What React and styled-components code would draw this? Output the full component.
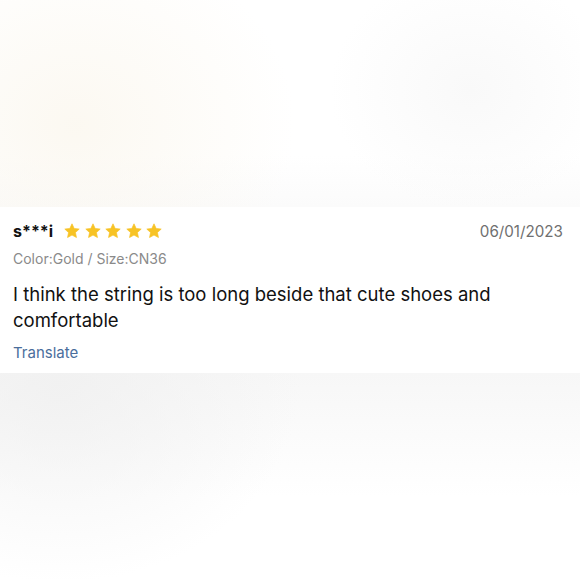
import React from "react";
import styled, { createGlobalStyle } from "styled-components";

const GlobalStyle = createGlobalStyle`
  html, body {
    margin: 0;
    padding: 0;
    background: #ffffff;
  }
  body {
    font-family: Inter, "Liberation Sans", sans-serif;
    -webkit-font-smoothing: antialiased;
  }
`;

const review = {
  user: "s***i",
  rating: 5,
  date: "06/01/2023",
  sku: "Color:Gold / Size:CN36",
  text: "I think the string is too long beside that cute shoes and comfortable",
};

const Star = () => (
  <svg width="16" height="16" viewBox="0 0 24 24">
    <path
      d="M12 1.2l3.3 7 7.5.9-5.6 5.2 1.5 7.5L12 18.1l-6.7 3.7 1.5-7.5-5.6-5.2 7.5-.9z"
      fill="#f7c325"
      stroke="#f7c325"
      strokeWidth="1"
      strokeLinejoin="round"
    />
  </svg>
);

const App = () => {
  return (
    <>
      <GlobalStyle />
      <Page>
        <TopBlur />
        <Card>
          <HeaderRow>
            <UserBox>
              <UserName>{review.user}</UserName>
              <Stars>
                {Array.from({ length: review.rating }).map((_, i) => (
                  <Star key={i} />
                ))}
              </Stars>
            </UserBox>
            <DateText>{review.date}</DateText>
          </HeaderRow>
          <Sku>{review.sku}</Sku>
          <Body>{review.text}</Body>
          <TranslateLink>Translate</TranslateLink>
        </Card>
        <BottomBlur />
      </Page>
    </>
  );
};

export default App;

const Page = styled.div`
  height: 580px;
  display: flex;
  flex-direction: column;
`;

const TopBlur = styled.div`
  height: 207px;
  background:
    radial-gradient(ellipse 220px 190px at 75px 125px, rgba(250, 245, 234, 0.65), rgba(255, 255, 255, 0) 100%),
    radial-gradient(ellipse 140px 120px at 470px 90px, rgba(247, 247, 247, 0.75), rgba(255, 255, 255, 0) 100%),
    linear-gradient(to bottom, #ffffff 75%, #fbfbfb 100%);
`;

const Card = styled.section`
  height: 166px;
  box-sizing: border-box;
  background: #ffffff;
  padding: 14px 17px 0 13px;
`;

const HeaderRow = styled.div`
  display: flex;
  align-items: center;
  justify-content: space-between;
`;

const UserBox = styled.div`
  display: flex;
  align-items: center;
  gap: 11px;
`;

const UserName = styled.span`
  font-size: 16px;
  font-weight: 700;
  color: #111111;
`;

const Stars = styled.div`
  display: flex;
  gap: 4.5px;
`;

const DateText = styled.span`
  font-size: 15.2px;
  color: #6f6f6f;
`;

const Sku = styled.div`
  margin-top: 9px;
  font-size: 14px;
  color: #8a8a8a;
`;

const Body = styled.p`
  margin: 14px 0 0;
  font-size: 18.5px;
  line-height: 26px;
  color: #111111;
`;

const TranslateLink = styled.div`
  margin-top: 10px;
  font-size: 15px;
  color: #4a6e9c;
`;

const BottomBlur = styled.div`
  flex: 1;
  background:
    radial-gradient(ellipse 240px 200px at 60px 10px, rgba(240, 240, 240, 0.85), rgba(255, 255, 255, 0) 100%),
    linear-gradient(to bottom, #f7f7f7 0%, #fbfbfb 30%, #ffffff 60%);
`;
